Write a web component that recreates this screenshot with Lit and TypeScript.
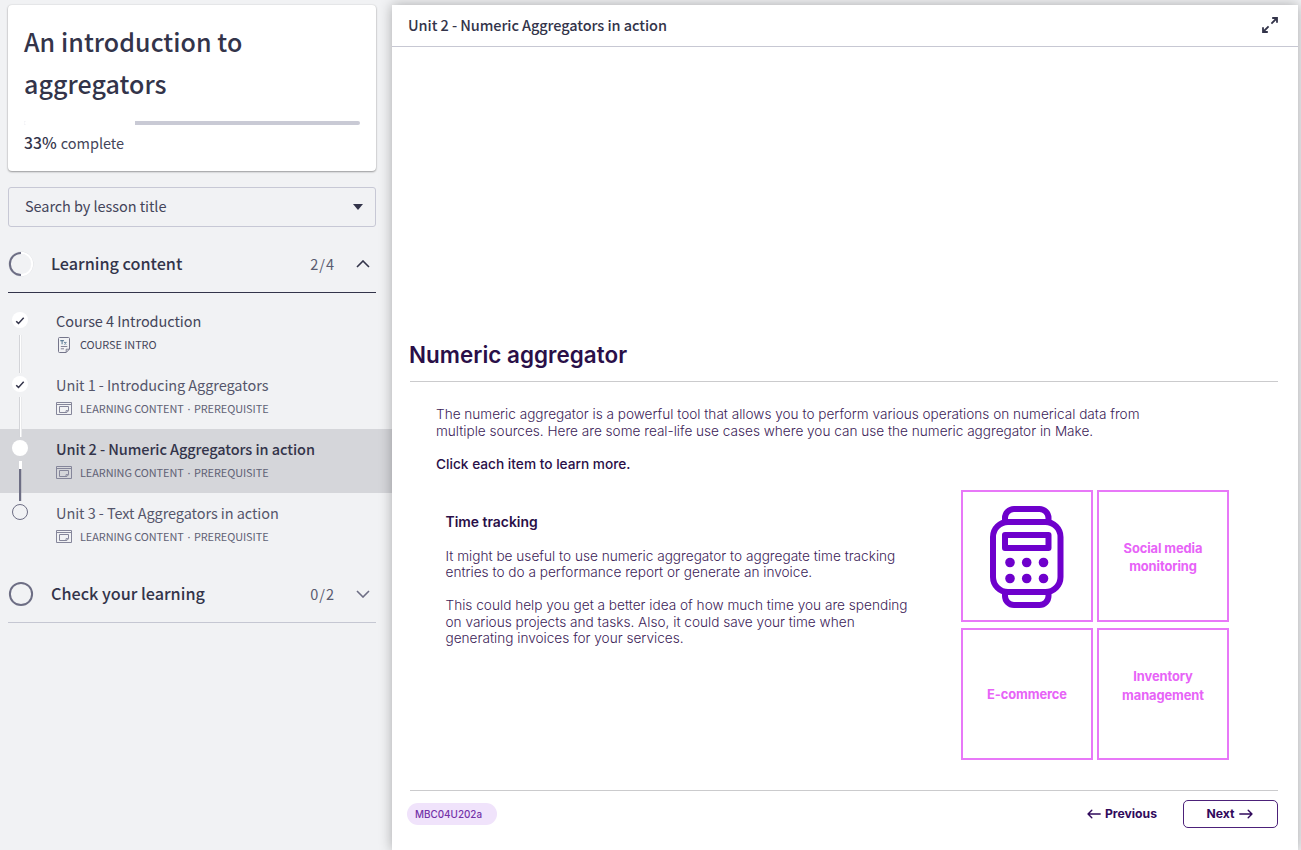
import { LitElement, html, css, svg } from "lit";
import { customElement } from "lit/decorators.js";

const pageIcon = html`<svg class="kind" width="16" height="16" viewBox="0 0 16 16" fill="none" stroke="#74758a">
  <path d="M2.500 1.500a1 1 0 0 1 1-1h9a1 1 0 0 1 1 1v10.500l-3.300 3.500h-6.700a1 1 0 0 1-1-1z" />
  <path d="M10.200 15.200v-3h3.100M4.800 9.500h6.500M4.800 11.800h3.200" stroke-width="0.900" />
  <path d="M4.300 3.600h3.600M6.100 3.600v3.600M8.200 5l2.200 2.400M10.400 5l-2.200 2.400" stroke="#5f7d98" stroke-width="1.100" />
</svg>`;

const windowIcon = html`<svg class="kind" width="16" height="16" viewBox="0 0 16 16" fill="none" stroke="#85869a">
  <path d="M.5 1.500h15v12H.5zM.5 3.500h15" />
  <path d="M3.500 5.500h9v4.200l-1.600 1.800H3.500z" />
  <path d="M10 11.300v-1.700h2.400" stroke-width="0.900" />
</svg>`;

@customElement("app-root")
export class AppRoot extends LitElement {
  static styles = css`
    :host {
      display: flex;
      width: 1301px;
      height: 850px;
      overflow: hidden;
      background: #f1f2f4;
      color: #33344a;
      font-family: "Noto Sans CJK SC", "Noto Sans", sans-serif;
    }
    * { box-sizing: border-box; }
    svg { display: block; flex: none; }
    .t { white-space: nowrap; display: inline-block; }
    .side { width: 392px; flex: none; padding-top: 5px; }
    .card {
      margin-left: 8px; width: 368px; height: 166px; padding: 15px 16px 0;
      background: #fff; border-radius: 4px;
      box-shadow: 0 1px 2px rgba(0,0,0,.35), 0 0 2px rgba(0,0,0,.12);
    }
    .title { font-size: 25px; font-weight: 500; line-height: 42px; height: 84px; letter-spacing: .06px; display: flex; flex-direction: column; align-items: flex-start; }
    .bar { margin-top: 17px; height: 4px; border-radius: 2px; background: #c9cad5; overflow: hidden; }
    .fill { height: 4px; background: #fff; }
    .progress { margin-top: 7px; line-height: 22px; font-size: 14.500px; display: flex; gap: 4px; color: #44455a; }
    .pct { font-weight: 500; font-size: 15.700px; color: #33344a; }
    .search {
      margin: 16px 0 0 8px; width: 368px; height: 40px; border: 1px solid #c7c8d5; border-radius: 3px;
      display: flex; align-items: center; justify-content: space-between; padding: 0 12px 0 16px;
      font-size: 14.500px; line-height: 20px; letter-spacing: -.07px; color: #44455a;
    }
    .search .t, .name .t, .head .t { padding-bottom: 2px; }
    .sec {
      margin-left: 8px; width: 368px; height: 58px; border-bottom: 1px solid #c5c7d2;
      display: flex; align-items: center;
    }
    .sec.open { margin-top: 8px; border-color: #33344a; }
    .sec .name { margin-left: 17px; flex: 1; font-size: 16.200px; font-weight: 500; line-height: 24px; }
    .count { font-size: 14.500px; line-height: 24px; letter-spacing: 1px; color: #5a5b70; margin-right: 21px; }
    .chev { margin-right: 6px; }
    .list { padding: 8px 0; }
    .item { height: 64px; display: flex; color: #55566b; }
    .item.now { background: #d5d6da; color: #33344a; }
    .item.now .lesson { font-weight: 500; }
    .item.first { color: #44455a; }
    .rail { width: 56px; flex: none; }
    .lesson { display: block; margin-top: 9px; font-size: 14.500px; line-height: 22px; letter-spacing: -.07px; }
    .meta { display: flex; align-items: center; gap: 8px; height: 24px; font-size: 10.900px; line-height: 16px; letter-spacing: -.06px; color: #606175; }
    .kind { margin-top: 2px; }
    .dot { font-family: "Noto Sans", sans-serif; margin: 0 1.300px; }
    .first .meta { color: #44455a; }

    .main {
      margin-top: 5px; width: 906px; height: 845px; background: #fff; display: flex; flex-direction: column;
      box-shadow: 0 0 12px rgba(0,0,0,.3);
      font-family: Inter, sans-serif; color: #2a0f48;
    }
    .head {
      height: 42px; flex: none; border-bottom: 1px solid #c7c8d3; display: flex; align-items: center; justify-content: space-between;
      padding: 0 19px 0 16px; font-family: "Noto Sans CJK SC", sans-serif; font-size: 14.500px; font-weight: 500; color: #33344a; line-height: 22px; letter-spacing: -.07px;
    }
    .head svg { margin-bottom: 1px; }
    .body { padding: 293px 20px 0 17px; }
    h1 { margin: 0; font-size: 22.400px; line-height: 30px; font-weight: 600; letter-spacing: .04px; }
    .rule { height: 1px; background: #cbcbcd; margin-left: 1px; }
    .h1rule { margin-top: 11px; }
    .intro { margin: 24px 0 0 27px; display: flex; flex-direction: column; align-items: flex-start; font-size: 13.600px; line-height: 17px; font-weight: 300; color: #3c2358; }
    .click { font-weight: 500; margin-top: 16px; color: #2a0f48; font-size: 13.700px; }
    .cols { display: flex; justify-content: space-between; margin: 17px 49px 0 36.500px; }
    .copy { display: flex; flex-direction: column; align-items: flex-start; font-size: 13.630px; line-height: 16.500px; font-weight: 300; color: #3c2358; padding-top: 22px; }
    .copy .sub { font-weight: 600; font-size: 13.900px; line-height: 20px; margin-bottom: 15.500px; color: #2a0f48; }
    .gap { margin-top: 16.500px; }
    .tiles { display: grid; grid-template-columns: 132px 132px; grid-template-rows: 132px 132px; gap: 6px 4px; }
    .tile {
      border: 2px solid #e878f8; display: flex; flex-direction: column; align-items: center; justify-content: center;
      color: #e763f7; font-size: 12.900px; letter-spacing: -.1px; line-height: 18.500px; font-weight: 700;
    }
    .tile.watch { padding: 2px 1px 0 0; }
    .tile.social { padding-top: 4px; }
    .tile.inv { padding-bottom: 15px; }
    .tile.com { padding-top: 3px; }
    .foot { margin-top: 30px; }
    .nav { display: flex; align-items: center; height: 28px; margin-top: 9px; margin-left: -2px; font-size: 12.200px; font-weight: 700; color: #310a5c; }
    .nav .t { margin-bottom: 1px; }
    .pill { width: 90px; height: 22px; border-radius: 11px; background: #f0e3fb; color: #7432a8; font-size: 9.900px; font-weight: 500; line-height: 22px; padding-left: 8px; }
    .prev { margin-left: auto; display: flex; align-items: center; gap: 4px; margin-right: 26px; }
    .next { width: 95px; height: 28px; border: 1px solid #4c2179; border-radius: 5px; display: flex; align-items: center; justify-content: center; gap: 4px; padding-right: 2px; }
  `;

  item(name: string, meta: string[], state: string) {
    return html`<div class="item ${state}">
      <div class="rail">${this.rail(state)}</div>
      <div>
        <span class="t lesson">${name}</span>
        <div class="meta">${state === "first" ? pageIcon : windowIcon}<span class="t">${meta[0]}${meta[1] ? html` <span class="dot">·</span> ${meta[1]}` : ""}</span></div>
      </div>
    </div>`;
  }

  rail(state: string) {
    const done = state === "first" || state === "past";
    const seg = (y: number, h: number) => svg`<rect x="19" y=${y} width="3" height=${h} fill="#d3d4d8"/><rect x="20" y=${y} width="1.500" height=${h} fill="#fff"/>`;
    return html`<svg width="56" height="64" viewBox="0 0 56 64" fill="none">
      ${state === "first" ? seg(34, 30) : ""}
      ${state === "past" ? svg`${seg(0, 8)}${seg(32, 32)}` : ""}
      ${state === "now" ? svg`${seg(0, 8)}<rect x="19" y="32" width="3" height="8" fill="#fff"/><rect x="19" y="40" width="2.200" height="24" fill="#6d6e84"/>` : ""}
      ${state === "todo" ? svg`<rect x="19" y="0" width="2.200" height="8" fill="#6d6e84"/><circle cx="20" cy="19" r="7.500" stroke="#6d6e84"/>` : svg`<circle cx="20" cy="19" r="8" fill="#fff"/>`}
      ${done ? svg`<path d="M16.200 20.200l2.300 2.200 5.200-5.600" stroke="#33344a" stroke-width="1.500"/>` : ""}
    </svg>`;
  }

  arrow(left: boolean) {
    return html`<svg width="14" height="12" viewBox="0 0 14 12" fill="none" stroke="#310a5c" stroke-width="1.400" stroke-linecap="round" stroke-linejoin="round">
      <path d=${left ? "M13.200 6H1M4.800 2.200L1 6l3.800 3.800" : "M.8 6H13M9.200 2.200L13 6l-3.800 3.800"} />
    </svg>`;
  }

  render() {
    const unit = ["LEARNING CONTENT", "PREREQUISITE"];
    return html`
      <div class="side">
        <div class="card">
          <div class="title"><span class="t">An introduction to</span><span class="t">aggregators</span></div>
          <div class="bar"><div class="fill" style="width:33%"></div></div>
          <div class="progress"><span class="t pct">33%</span><span class="t">complete</span></div>
        </div>
        <div class="search"><span class="t">Search by lesson title</span>
          <svg width="10" height="6" viewBox="0 0 10 6"><path d="M0 0h10L5 6z" fill="#33344a"/></svg></div>
        <div class="sec open">
          <svg width="26" height="26" viewBox="0 0 26 26" fill="none" stroke-width="2">
            <circle cx="13" cy="13" r="11.500" stroke="#dcdde1"/>
            <path d="M13 1.800a11.200 11.200 0 0 1 0 22.400" stroke="#fff"/>
            <path d="M13 1.900a11.100 11.100 0 0 0 0 22.200" stroke="#6d6e84"/>
          </svg>
          <span class="name"><span class="t">Learning content</span></span>
          <span class="t count">2/4</span>
          <svg class="chev" width="14" height="8" viewBox="0 0 14 8" fill="none" stroke="#33344a" stroke-width="1.600"><path d="M1 7l6-6 6 6"/></svg>
        </div>
        <div class="list">
          ${this.item("Course 4 Introduction", ["COURSE INTRO"], "first")}
          ${this.item("Unit 1 - Introducing Aggregators", unit, "past")}
          ${this.item("Unit 2 - Numeric Aggregators in action", unit, "now")}
          ${this.item("Unit 3 - Text Aggregators in action", unit, "todo")}
        </div>
        <div class="sec">
          <svg width="26" height="26" viewBox="0 0 26 26" fill="none" stroke-width="2"><circle cx="13" cy="13" r="11.100" stroke="#6d6e84"/></svg>
          <span class="name"><span class="t">Check your learning</span></span>
          <span class="t count">0/2</span>
          <svg class="chev" width="14" height="8" viewBox="0 0 14 8" fill="none" stroke="#6d6e84" stroke-width="1.600"><path d="M1 1l6 6 6-6"/></svg>
        </div>
      </div>
      <div class="main">
        <div class="head"><span class="t">Unit 2 - Numeric Aggregators in action</span>
          <svg width="18" height="18" viewBox="0 0 18 18" fill="none" stroke="#33344a" stroke-width="1.800"><path d="M10.400 7.600l5.600-5.600M11.200 2H16v4.800M7.600 10.400L2 16M2 11.200V16h4.800"/></svg>
        </div>
        <div class="body">
          <h1><span class="t">Numeric aggregator</span></h1>
          <div class="rule h1rule"></div>
          <div class="intro">
            <span class="t">The numeric aggregator is a powerful tool that allows you to perform various operations on numerical data from</span>
            <span class="t">multiple sources. Here are some real-life use cases where you can use the numeric aggregator in Make.</span>
            <span class="t click">Click each item to learn more.</span>
          </div>
          <div class="cols">
            <div class="copy">
              <span class="t sub">Time tracking</span>
              <span class="t">It might be useful to use numeric aggregator to aggregate time tracking</span>
              <span class="t">entries to do a performance report or generate an invoice.</span>
              <span class="t gap">This could help you get a better idea of how much time you are spending</span>
              <span class="t">on various projects and tasks. Also, it could save your time when</span>
              <span class="t">generating invoices for your services.</span>
            </div>
            <div class="tiles">
              <div class="tile watch">
                <svg width="76" height="104" viewBox="0 0 76 104" fill="none" stroke="#6e00cc" stroke-width="6">
                  <rect x="4" y="17" width="67.500" height="70" rx="15"/>
                  <path d="M16 17v-4a9 9 0 0 1 9-9h25.500a9 9 0 0 1 9 9v4M16 87v4a9 9 0 0 0 9 9h25.500a9 9 0 0 0 9-9v-4"/>
                  <rect x="16" y="30" width="43.500" height="13" stroke-linejoin="round"/>
                  <g fill="#6e00cc" stroke="none">${[21, 37.7, 54.5].map((x) => [57.5, 73.5].map((y) => svg`<circle cx=${x} cy=${y} r="4.800"/>`))}</g>
                </svg>
              </div>
              <div class="tile social"><span class="t">Social media</span><span class="t">monitoring</span></div>
              <div class="tile com"><span class="t">E-commerce</span></div>
              <div class="tile inv"><span class="t">Inventory</span><span class="t">management</span></div>
            </div>
          </div>
          <div class="rule foot"></div>
          <div class="nav">
            <div class="pill"><span class="t">MBC04U202a</span></div>
            <div class="prev">${this.arrow(true)}<span class="t">Previous</span></div>
            <div class="next"><span class="t">Next</span>${this.arrow(false)}</div>
          </div>
        </div>
      </div>
    `;
  }
}
